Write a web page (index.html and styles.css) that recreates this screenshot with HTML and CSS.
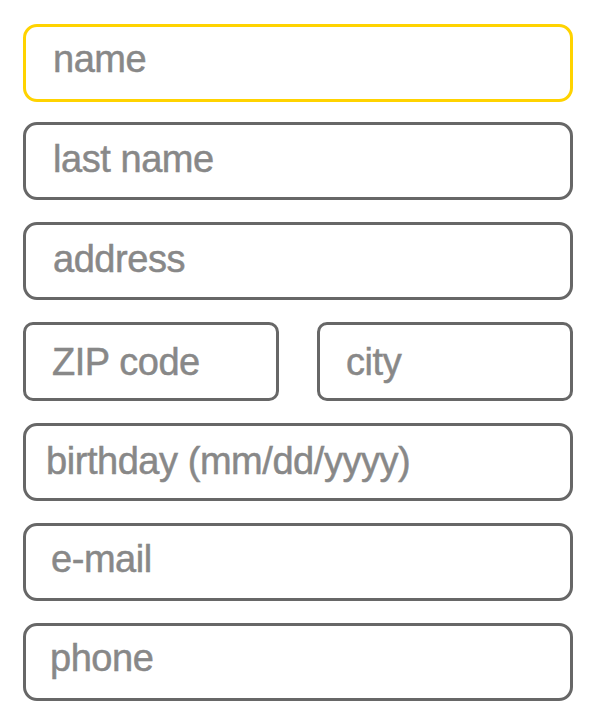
FILE: index.html
```html
<!DOCTYPE html>
<html lang="en">
<head>
<meta charset="utf-8">
<title>Form</title>
<link rel="stylesheet" href="styles.css">
</head>
<body>
<form class="form">
  <div class="field field--focus"><span class="label label--name">name</span></div>
  <div class="field"><span class="label">last name</span></div>
  <div class="field"><span class="label">address</span></div>
  <div class="pair">
    <div class="field field--small"><span class="label label--pair">ZIP code</span></div>
    <div class="field field--small field--city"><span class="label label--pair">city</span></div>
  </div>
  <div class="field field--tight"><span class="label label--low">birthday (mm/dd/yyyy)</span></div>
  <div class="field"><span class="label label--email">e-mail</span></div>
  <div class="field"><span class="label label--phone">phone</span></div>
</form>
</body>
</html>
```

FILE: styles.css
```css
html, body {
  margin: 0;
  padding: 0;
  background: #ffffff;
}

.form {
  display: flex;
  flex-direction: column;
  gap: 22px;
  padding: 24px 22px 0 23px;
  width: 550px;
}

.field {
  box-sizing: border-box;
  height: 78px;
  border: 3px solid #676767;
  border-radius: 14px;
  display: flex;
  align-items: center;
  padding-left: 27px;
  background: #fff;
}

.field--focus {
  border-color: #ffd300;
  margin-bottom: -2px;
}

.field--small {
  flex: 1;
  height: 79px;
  border-radius: 10px;
  padding-left: 26px;
}

.field--city {
  padding-left: 26px;
}

.field--tight {
  padding-left: 20px;
}

.pair {
  display: flex;
  gap: 38px;
}

.label {
  font-family: "Liberation Sans", Arial, sans-serif;
  font-size: 38px;
  line-height: 1;
  letter-spacing: -0.45px;
  color: #888888;
  -webkit-text-stroke: 0.5px #888888;
  white-space: nowrap;
  margin-top: -4px;
}

.label--name {
  margin-top: -8px;
}

.label--pair {
  margin-top: 0;
}

.label--low {
  margin-top: -2px;
}

.label--email {
  margin-left: -2px;
  margin-top: -6px;
}

.label--phone {
  margin-left: -3px;
  margin-top: -9px;
}
```
